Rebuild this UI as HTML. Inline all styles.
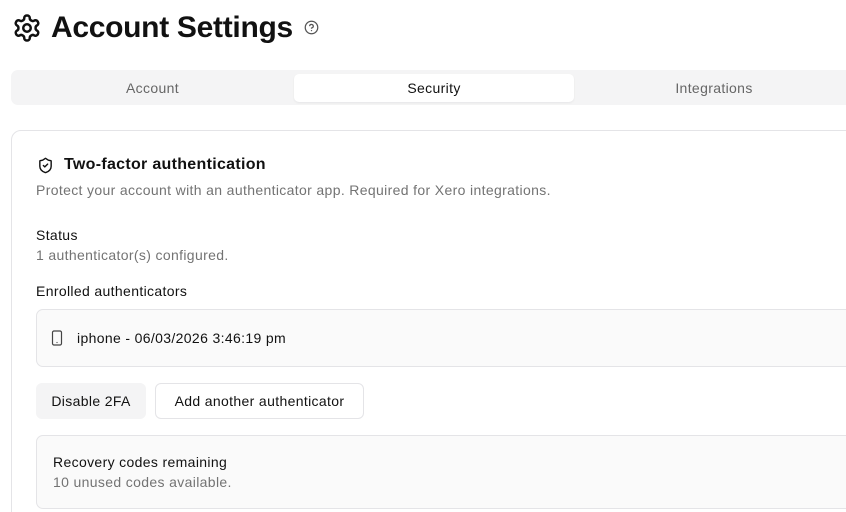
<!DOCTYPE html>
<html style="overflow:hidden;height:512px"><head><style>
*{box-sizing:border-box;margin:0;padding:0}
body{width:846px;height:512px;overflow:hidden;background:#fff;font-family:"Liberation Sans",sans-serif;color:#111;position:relative;letter-spacing:.35px}
.a{position:absolute;white-space:nowrap}
</style></head><body>
<svg class="a" style="left:12px;top:13px" width="30" height="30" viewBox="0 0 24 24" fill="none" stroke="#111" stroke-width="2" stroke-linecap="round" stroke-linejoin="round"><path d="M12.22 2h-.44a2 2 0 0 0-2 2v.18a2 2 0 0 1-1 1.730l-.43.25a2 2 0 0 1-2 0l-.15-.08a2 2 0 0 0-2.73.73l-.22.38a2 2 0 0 0 .73 2.730l.15.1a2 2 0 0 1 1 1.72v.51a2 2 0 0 1-1 1.74l-.15.09a2 2 0 0 0-.73 2.73l.22.38a2 2 0 0 0 2.73.73l.15-.08a2 2 0 0 1 2 0l.43.25a2 2 0 0 1 1 1.73V20a2 2 0 0 0 2 2h.44a2 2 0 0 0 2-2v-.18a2 2 0 0 1 1-1.73l.43-.25a2 2 0 0 1 2 0l.15.08a2 2 0 0 0 2.73-.73l.22-.39a2 2 0 0 0-.73-2.73l-.15-.08a2 2 0 0 1-1-1.74v-.5a2 2 0 0 1 1-1.74l.15-.09a2 2 0 0 0 .73-2.73l-.22-.38a2 2 0 0 0-2.73-.73l-.15.08a2 2 0 0 1-2 0l-.43-.25a2 2 0 0 1-1-1.73V4a2 2 0 0 0-2-2z"/><circle cx="12" cy="12" r="3"/></svg>
<div class="a" style="left:51px;top:11px;font-size:30px;font-weight:bold;letter-spacing:-0.3px">Account Settings</div>
<svg class="a" style="left:304px;top:20px" width="15" height="15" viewBox="0 0 24 24" fill="none" stroke="#555" stroke-width="2" stroke-linecap="round"><circle cx="12" cy="12" r="10"/><path d="M9.1 9a3 3 0 0 1 5.8 1c0 2-3 3-3 3"/><path d="M12 17h.01"/></svg>
<div class="a" style="left:11px;top:70px;width:850px;height:35px;background:#f4f4f5;border-radius:7px"></div>
<div class="a" style="left:294px;top:74px;width:280px;height:28px;background:#fff;border-radius:5px;box-shadow:0 1px 2px rgba(0,0,0,.06)"></div>
<div class="a" style="left:11px;top:80px;width:283px;text-align:center;font-size:14px;color:#666">Account</div>
<div class="a" style="left:294px;top:80px;width:280px;text-align:center;font-size:14px;color:#111">Security</div>
<div class="a" style="left:574px;top:80px;width:280px;text-align:center;font-size:14px;color:#666">Integrations</div>
<div class="a" style="left:11px;top:130px;width:860px;height:400px;border:1px solid #e4e4e7;border-radius:10px"></div>
<svg class="a" style="left:37px;top:157px" width="17" height="17" viewBox="0 0 24 24" fill="none" stroke="#111" stroke-width="2" stroke-linecap="round" stroke-linejoin="round"><path d="M20 13c0 5-3.5 7.5-7.66 8.95a1 1 0 0 1-.67-.01C7.5 20.5 4 18 4 13V6a1 1 0 0 1 1-1c2 0 4.5-1.2 6.24-2.72a1.17 1.17 0 0 1 1.52 0C14.51 3.81 17 5 19 5a1 1 0 0 1 1 1z"/><path d="m9 12 2 2 4-4"/></svg>
<div class="a" style="left:64px;top:156px;font-size:16px;font-weight:bold;letter-spacing:.3px">Two-factor authentication</div>
<div class="a" style="left:36px;top:182px;font-size:14px;color:#737373">Protect your account with an authenticator app. Required for Xero integrations.</div>
<div class="a" style="left:36px;top:227px;font-size:14px">Status</div>
<div class="a" style="left:36px;top:247px;font-size:14px;color:#737373">1 authenticator(s) configured.</div>
<div class="a" style="left:36px;top:283px;font-size:14px">Enrolled authenticators</div>
<div class="a" style="left:36px;top:309px;width:830px;height:58px;border:1px solid #e4e4e7;border-radius:7px;background:#fafafa"></div>
<svg class="a" style="left:50px;top:330px" width="14" height="16" viewBox="0 0 14 16" fill="none" stroke="#444" stroke-width="1.2"><rect x="2.5" y="1" width="9" height="14" rx="1.5"/><path d="M7 12.5h.01" stroke-linecap="round"/></svg>
<div class="a" style="left:77px;top:330px;font-size:14px">iphone - 06/03/2026 3:46:19 pm</div>
<div class="a" style="left:36px;top:383px;width:110px;height:36px;background:#f4f4f5;border-radius:6px;font-size:14px;line-height:36px;text-align:center">Disable 2FA</div>
<div class="a" style="left:155px;top:383px;width:209px;height:36px;border:1px solid #e4e4e7;border-radius:6px;font-size:14px;line-height:34px;text-align:center">Add another authenticator</div>
<div class="a" style="left:36px;top:435px;width:830px;height:74px;border:1px solid #e4e4e7;border-radius:7px;background:#fafafa"></div>
<div class="a" style="left:53px;top:454px;font-size:14px">Recovery codes remaining</div>
<div class="a" style="left:53px;top:474px;font-size:14px;color:#737373">10 unused codes available.</div>
</body></html>
